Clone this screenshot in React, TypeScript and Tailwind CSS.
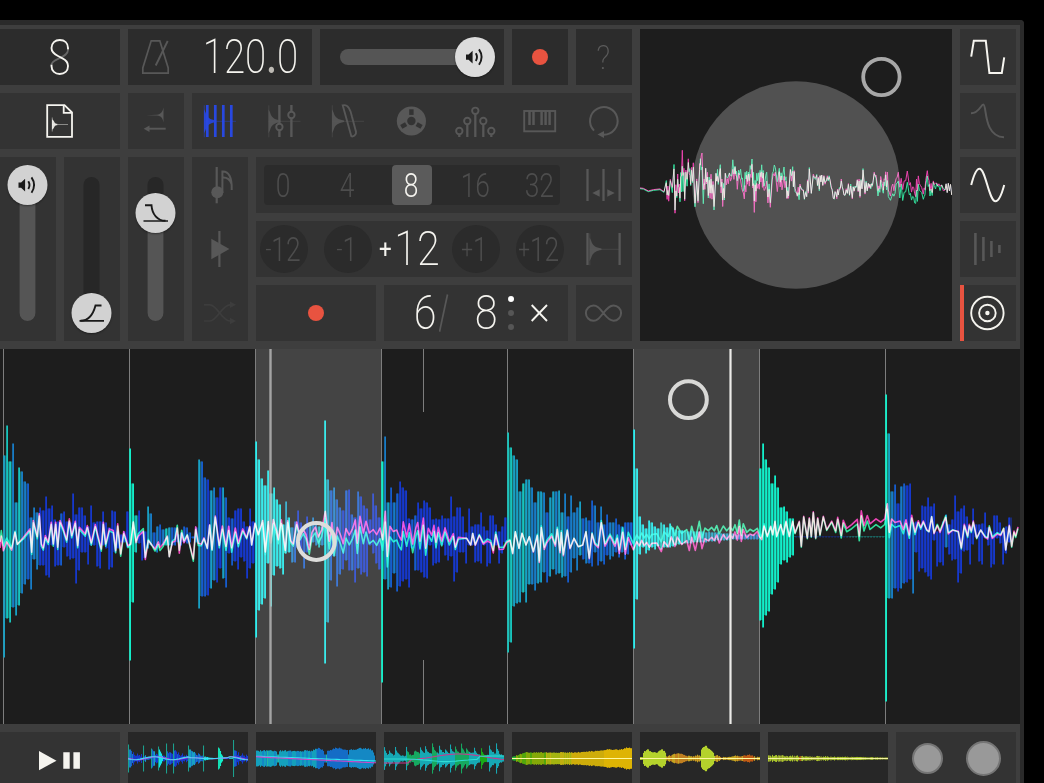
import React from "react";

const INK = "#f5f4ef";
const DIM = "#585858";

/* ---------- waveform data: one entry per beat, one bar every 3px ---------- */
type Beat = { up: number[]; down: number[]; tint: string };

const PALETTE: Record<string, string> = {
  a: "#12efca",
  b: "#17c4bc",
  c: "#18a0c4",
  d: "#187cc6",
  e: "#165cce",
  f: "#1638cc",
  g: "#10e6e8",
};

const BEATS: Beat[] = [
  {
    up: [81,111,75,93,34,69,65,55,53,19,29,24,29,26,40,28,31,17,15,23,25,15,14,43,22,29,29,21,10,31,14,15,15,25,14,9,26,25,5,2,5,25],
    down: [120,81,85,70,78,68,56,47,42,52,22,32,28,28,38,40,8,29,28,28,10,19,22,21,46,33,15,15,27,8,8,29,31,8,11,32,30,15,11,5,5,10],
    tint: "cbbdcbddedddfffffffeffffffffffffffffffffff",
  },
  {
    up: [88,53,21,26,5,5,30,23,4,10,12,7,8,9,9,9,2,4,10,9,4,0,9,77,75,59,57,46,49,39,49,49,39,19,18,26,28,28,15,10,28,15],
    down: [123,65,15,6,23,21,11,8,11,15,8,8,8,8,8,8,5,8,5,6,5,1,5,71,59,59,58,51,43,45,31,41,50,16,28,24,32,20,24,41,31,26],
    tint: "aabfffcdededbceeeeeeeeeceefcdffcefefffffff",
  },
  {
    up: [95,77,58,51,66,43,49,37,32,12,35,19,9,15,26,14,9,20,12,19,12,10,12,116,57,46,49,37,29,26,46,47,22,19,45,40,31,28,17,43,31,19],
    down: [100,73,67,61,26,69,38,29,31,37,16,15,25,25,11,15,31,15,8,5,8,10,8,126,85,43,19,49,37,32,23,33,33,45,31,37,35,39,8,16,26,32],
    tint: "ggggggggggcgdeffefcddbdgcedeefefefefffffff",
  },
  {
    up: [75,100,34,49,34,43,55,49,46,18,17,21,34,28,36,34,29,17,18,17,21,18,18,40,20,29,29,20,4,28,10,12,12,24,10,6,21,21,12,5,10,19],
    down: [145,42,52,50,36,54,49,44,42,50,11,33,33,35,40,41,8,28,26,25,8,18,23,19,44,35,15,15,26,8,8,25,24,26,8,29,26,8,8,26,16,5],
    tint: "adcedeffffeeffffffffffffffffffffffffffffff",
  },
  {
    up: [104,89,81,77,45,53,57,57,49,34,45,45,44,24,39,45,45,46,24,43,20,41,24,29,35,18,19,16,36,31,14,30,12,22,14,14,18,12,10,14,14,14],
    down: [115,105,69,66,65,55,65,47,47,53,46,45,35,45,39,32,37,36,40,39,45,35,21,33,18,22,26,26,29,15,28,24,27,18,22,19,15,20,15,22,17,8],
    tint: "bbcccbccddccdeccdccdedddcedeededeeddeedeee",
  },
  {
    up: [107,68,20,12,8,16,14,10,8,14,12,9,13,9,7,6,6,6,5,6,5,5,5,5,4,5,4,4,4,3,3,3,3,3,2,2,2,2,2,2,2,2],
    down: [111,62,17,10,16,13,10,12,9,12,10,10,10,9,8,7,7,6,6,6,5,5,5,5,5,4,4,4,3,3,3,3,3,2,2,2,2,2,2,2,2,2],
    tint: "gggggggggbggggbggbccbbccccccccccccdddddddd",
  },
  {
    up: [68,93,77,69,53,61,49,29,30,25,18,18,0,0,0,0,0,0,0,0,0,0,0,0,0,0,0,0,0,0,0,0,0,0,0,0,0,0,0,0,0,0],
    down: [83,90,78,74,57,52,45,27,23,25,20,18,0,0,0,0,0,0,0,0,0,0,0,0,0,0,0,0,0,0,0,0,0,0,0,0,0,0,0,0,0,0],
    tint: "aaaaaaaaaaaafffffffdfffffffffdbbbbbbbbbbbb",
  },
  {
    up: [142,103,45,52,33,50,53,51,53,14,15,12,31,30,39,30,33,5,7,15,22,12,17,41,25,28,31,20,10,28,12,12,13,24,9,5,21,21,14,5,10,19],
    down: [164,61,61,51,54,51,46,45,42,56,15,34,31,35,39,42,3,29,25,28,10,17,23,22,45,36,14,13,27,7,0,24,27,1,8,30,27,1,6,27,16,5],
    tint: "acdefdeffdffffffffffdfffffffffffffffffffff",
  },
];

const BARS = BEATS.flatMap((b, n) =>
  b.up.map((u, i) => ({
    x: 3 + n * 126 + i * 3,
    up: u,
    down: b.down[i],
    color: PALETTE[b.tint[i]] ?? PALETTE.f,
  })),
);

/* deterministic pseudo-random value in 0..1 */
const noise = (n: number) => {
  const s = Math.sin(n * 127.1 + 11.7) * 43758.5453;
  return s - Math.floor(s);
};

/* ---------- input traces, stored as x,y pairs in third-pixel units ---------- */
type Trace = { ox: number; oy: number; pts: string };

const MAIN_TRACES: Trace[] = [
  {
    ox: 0,
    oy: 345,
    pts: "0,600 4,565 10,610 20,585 35,612 45,560 52,598 70,580 90,555 95,625 100,530 112,578 118,510 124,600 130,612 136,575 145,595 154,535 160,600 167,535 173,610 180,530 190,555 200,588 208,525 215,575 226,532 233,605 238,550 256,570 262,545 274,597 286,542 295,580 304,615 310,535 317,600 328,555 340,560 347,620 353,540 362,630 371,563 384,605 392,598 400,530 408,590 415,570 430,555 436,640 445,585 455,600 465,615 475,595 480,612 490,600 502,575 508,635 517,590 525,585 532,545 538,620 545,560 552,590 562,570 580,645 587,550 595,598 604,600 612,580 622,610 629,540 636,615 646,515 658,605 667,548 678,610 686,550 695,615 706,555 715,600 728,555 740,580 749,545 755,600",
  },
  {
    ox: 250,
    oy: 345,
    pts: "15,535 25,570 38,530 46,625 55,535 62,600 70,530 80,565 85,590 94,530 106,620 113,530 122,590 130,600 140,535 150,580 160,560 168,575 178,620 186,570 196,555 205,585 215,565 226,510 238,600 246,545 252,620 262,560 272,585 280,610 288,565 298,585 308,565 316,540 322,610 330,530 340,580 348,545 358,580 370,570 380,585 390,565 398,600 406,515 412,650 420,560 430,575 440,570 448,590 454,600 460,545 470,590 478,550 488,610 498,560 503,545 510,600 520,530 527,620 535,560 545,580 552,550 558,600 565,555 575,595 585,555 598,595 610,570 616,610 625,580 650,580 662,600 668,565 676,600 688,570 700,595 712,585 722,590 730,620 737,565 748,610",
  },
  {
    ox: 500,
    oy: 345,
    pts: "10,610 20,590 30,585 38,625 46,560 57,610 66,565 78,600 88,575 100,620 112,570 118,650 124,545 133,610 140,590 155,570 166,600 172,550 180,620 184,560 190,630 202,555 210,610 222,580 235,605 248,600 258,560 268,640 276,565 284,595 295,605 304,530 315,600 330,570 345,600 352,575 358,620 368,555 376,620 385,570 400,605 410,580 418,592 425,575 433,590 440,580 448,594 455,582 470,580 484,605 492,575 505,590 514,560 525,588 532,560 545,582 560,570 568,600 575,560 586,600 598,545 606,595 615,565 625,572 635,562 643,572 650,556 658,580 670,556 680,570 690,558 698,568 705,550 712,575 718,535 724,580 730,545 740,570 750,560 760,565 772,555",
  },
  {
    ox: 750,
    oy: 345,
    pts: "28,570 35,580 42,540 52,575 62,545 68,570 75,530 80,575 92,540 100,570 108,530 118,575 128,530 135,565 148,530 154,605 161,515 172,580 178,520 184,575 190,502 197,580 203,520 210,570 220,515 230,555 245,530 257,560 263,520 274,575 280,530 290,555 305,545 322,530 328,580 334,505 342,550 352,520 360,545 378,530 392,540 404,530 412,485 418,570 425,530 435,540 450,535 460,560 468,530 478,575 485,515 495,565 505,530 512,550 520,530 530,555 537,560 545,515 552,565 562,540 570,560 587,515 595,565 608,555 625,560 634,610 643,540 653,575 658,540 664,560 670,530 680,580 692,555 705,575 713,580 718,545 727,578 742,565 752,570 761,550 767,615 778,542 785,605 792,560 797,575 804,548",
  },
];

const SCOPE_TRACE: Trace = {
  ox: 640,
  oy: 130,
  pts: "0,175 10,176 25,184 40,180 60,178 72,186 79,155 86,205 91,150 97,180 102,110 105,245 113,140 120,210 127,85 134,210 145,92 152,165 160,105 165,225 170,150 174,215 179,110 186,90 190,200 197,115 205,200 213,140 222,235 228,130 235,160 241,110 248,220 256,130 265,150 275,140 285,110 292,165 296,125 305,160 313,190 320,130 328,160 336,95 343,230 350,145 358,170 365,115 372,175 380,140 391,225 397,140 406,120 412,170 418,120 426,165 432,125 441,205 448,165 458,117 465,180 472,198 480,165 490,180 500,200 508,115 514,190 520,135 530,135 538,180 545,135 555,160 562,140 570,150 580,205 588,190 595,195 604,150 612,195 622,190 632,165 637,205 645,170 652,150 660,200 669,118 675,190 685,160 692,175 700,150 708,140 714,190 722,145 730,185 737,130 745,190 755,185 765,175 775,140 788,195 802,140 808,180 818,185 827,210 835,150 845,180 850,200 857,160 862,130 870,190 880,155 890,160 900,175 915,180 925,160 935,195",
};

/* fills wide gaps in a trace with extra jittered samples */
function densify(t: Trace): Trace {
  const pts = t.pts.split(" ").map((p) => p.split(",").map(Number));
  const out: string[] = [];
  pts.forEach(([x, y], i) => {
    out.push(`${x},${y}`);
    const next = pts[i + 1];
    if (next && x > 75 && next[0] - x >= 7) {
      const lo = y + (next[1] - y) * 0.33;
      const hi = y + (next[1] - y) * 0.66;
      const gap = next[0] - x;
      out.push(`${x + gap * 0.33},${hi + (noise(x) - 0.5) * 34}`);
      out.push(`${x + gap * 0.66},${lo + (noise(x + 5) - 0.5) * 34}`);
    }
  });
  return { ...t, pts: out.join(" ") };
}

/* vertical separation of the two channels at a given x */
function mainSpread(x: number): number {
  if (x < 25) return -3 + x / 6;
  if (x < 125) return 1.1;
  if (x < 195) return 1.5 * Math.sin(x / 6);
  if (x < 290) return 1.2 + Math.sin(x / 7);
  if (x < 460) return 4.6 * Math.sin(((x - 290) / 170) * Math.PI) + 0.8;
  if (x < 610) return 0.6 * Math.sin(x / 9) - 0.6;
  if (x < 765) return -5 * Math.sin(((x - 605) / 165) * Math.PI) - 0.5;
  if (x < 830) return 0.4;
  if (x < 925) return 2.5 * Math.sin(((x - 830) / 95) * Math.PI) + 0.4;
  return 0.8 * Math.sin(x / 8);
}

function scopeSpread(x: number): number {
  const wobble = noise(Math.round(x * 3)) - 0.5;
  if (x < 665) return 0.4;
  if (x < 712) return x > 681 && x < 683.5 ? 8 : x > 701 && x < 703.5 ? 7 : wobble * 7;
  if (x < 800) return -4 * Math.sin(((x - 712) / 88) * Math.PI) + wobble * 6;
  if (x < 870) return wobble * 2;
  if (x < 945) return 4.4 * Math.sin(((x - 870) / 75) * Math.PI) + wobble * 3;
  return 0;
}

function toPoints(traces: Trace[], side: number, spread: (x: number) => number): string {
  return traces
    .flatMap((t) =>
      t.pts.split(" ").map((p) => {
        const [px, py] = p.split(",").map(Number);
        const x = t.ox + px / 3;
        const y = t.oy + py / 3 + side * spread(x);
        return `${x.toFixed(1)},${y.toFixed(1)}`;
      }),
    )
    .join(" ");
}

/* ---------- building blocks ---------- */
function Icon({ x, y, w = 56, h = 56, children }: { x: number; y: number; w?: number; h?: number; children: React.ReactNode }) {
  return (
    <svg className="block shrink-0" width={w} height={h} viewBox={`${x} ${y} ${w} ${h}`} fill="none">
      {children}
    </svg>
  );
}

function Decay({ x, y, color = DIM, len = 32, size = 16 }: { x: number; y: number; color?: string; len?: number; size?: number }) {
  const s = size / 16;
  return (
    <g fill={color}>
      <path
        opacity={0.9}
        d={`M${x} ${y - 12 * s} L${x + 1.5} ${y - 9 * s} C${x + 3} ${y - 3.5 * s} ${x + 6 * s} ${y - 1.8 * s} ${x + 12 * s} ${y - 0.7} L${x + 12 * s} ${y + 0.7} C${x + 6 * s} ${y + 1.8 * s} ${x + 3} ${y + 3.5 * s} ${x + 1.5} ${y + 9 * s} L${x} ${y + 12 * s}Z`}
      />
      <rect x={x - 0.3} y={y - 16 * s} width={1.2} height={32 * s} opacity={0.4} />
      <rect x={x} y={y - 0.5} width={len} height={1} opacity={0.45} />
    </g>
  );
}

function Speaker() {
  return (
    <svg width="40" height="40" viewBox="0 0 40 40" fill="none" className="block">
      <path d="M11 17.5h2.600l4-3.700v12.600l-4-3.700H11z" fill="#1a1a1a" />
      <path d="M20.800 16.300q2.400 3.800 0 7.600" stroke="#1a1a1a" strokeWidth="1.900" />
      <path d="M24 12.400q5.200 7.600 0 15.400" stroke="#1a1a1a" strokeWidth="1.900" />
    </svg>
  );
}

function Fader({ knobTop, fill, children }: { knobTop: string; fill: string; children: React.ReactNode }) {
  return (
    <div className="flex h-[184px] w-14 justify-center bg-[#333333] pt-5">
      <div className="relative h-36 w-4 -translate-x-[0.5px] rounded-full bg-[#272727]">
        <div className={`absolute bottom-0 left-0 w-4 rounded-b-full bg-[#555555] ${fill}`} />
        <div className={`absolute -left-3 size-10 rounded-full bg-[#d2d2d2] shadow-[0_1px_2px_rgba(0,0,0,0.4)] ${knobTop}`}>{children}</div>
      </div>
    </div>
  );
}

/* ---------- main waveform ---------- */
const RULES = [3, 129, 255, 381, 507, 633, 759, 885];

function Waveform() {
  return (
    <svg className="block isolate" width="1020" height="375" viewBox="0 349 1020 375">
      <rect x="0" y="349" width="1020" height="375" fill="#1d1d1d" />
      {RULES.map((x) => (
        <rect key={x} x={x} y={349} width={1} height={375} fill="#7d7d7d" />
      ))}
      <rect x={423} y={349} width={1} height={63} fill="#7d7d7d" />
      <rect x={423} y={660} width={1} height={64} fill="#7d7d7d" />
      {BARS.map((b, i) => {
        const next = BARS[i + 1] ?? b;
        const u = Math.min(b.up, next.up);
        const d = Math.min(b.down, next.down);
        return (
          <g key={i} fill={b.color}>
            <rect x={b.x + 1} y={536.5 - u} width={3} height={u + d + 0.5} opacity={0.5} />
            <rect x={b.x + 0.2} y={536.5 - b.up} width={1.8} height={b.up + b.down + 1} opacity={b.up + b.down ? 1 : 0.5} />
          </g>
        );
      })}
      <rect x={256} y={349} width={125} height={375} fill="#ffffff" opacity={0.178} />
      <rect x={634} y={349} width={125} height={375} fill="#ffffff" opacity={0.17} />
      <g fill="none" strokeWidth={1.6} strokeLinejoin="round">
        <polyline points={toPoints(MAIN_TRACES, -1, mainSpread)} stroke="#e82cac" className="mix-blend-screen" />
        <polyline points={toPoints(MAIN_TRACES, 1, mainSpread)} stroke="#16dc90" className="mix-blend-screen" />
      </g>
      <rect x={269.3} y={349} width={2.4} height={375} fill="#b5b5b5" opacity={0.85} />
      <rect x={729.4} y={349} width={2.2} height={375} fill="#ecebe8" />
      <circle cx={316.3} cy={541.5} r={18.4} fill="none" stroke="#dddddb" strokeWidth={4} />
      <circle cx={688.4} cy={399.7} r={18.4} fill="none" stroke="#d9d9d7" strokeWidth={4} />
    </svg>
  );
}

function Scope() {
  const trace = [densify(SCOPE_TRACE)];
  return (
    <svg className="block isolate" width="312" height="312" viewBox="640 29 312 312">
      <rect x="640" y="29" width="312" height="312" fill="#1d1d1d" />
      <circle cx={796} cy={185} r={103.7} fill="#515151" />
      <g fill="none" strokeWidth={1} strokeLinejoin="round">
        <polyline points={toPoints(trace, -1, scopeSpread)} stroke="#e82ca4" className="mix-blend-screen" />
        <polyline points={toPoints(trace, 1, scopeSpread)} stroke="#18dc90" className="mix-blend-screen" />
      </g>
      <circle cx={881.4} cy={77} r={18.2} fill="none" stroke="#a8a8a8" strokeWidth={3.8} />
    </svg>
  );
}

/* ---------- clip thumbnails ---------- */
type Clip = { amp: (x: number) => number; color: (x: number) => string; lines: string[] };

const bump = (x: number, c: number, w: number, h: number) => h * Math.exp(-(((x - c) / w) ** 2));
const HITS = [0, 5, 11, 22, 30, 36, 41, 48, 55, 61, 66, 71, 77, 82, 90, 97, 105, 112];
const SPIKES: Record<number, number> = { 0: 14, 15: 13, 23: 10, 30: 12, 38: 15, 45: 15, 60: 13, 75: 13, 90: 11, 91: 10, 105: 18.5 };

const CLIPS: Clip[] = [
  {
    amp: (x) => {
      const b = BARS[Math.min(BARS.length - 1, Math.round(x * 2.8))];
      return SPIKES[x] ?? Math.min(9, Math.max(0.5, (b.up + b.down) * 0.08));
    },
    color: (x) => (x in SPIKES ? (x > 85 && x < 95 ? "#14e0b4" : "#1ba08e") : BARS[Math.min(335, Math.round(x * 2.8))].color),
    lines: ["#c43ae0", "#45d8f4"],
  },
  {
    amp: (x) => ([21, 22, 68, 69, 70, 92].includes(x) ? 4 : x > 116 ? 9 - (x - 116) * 3 : 6.8 + bump(x, 62, 4, 3) + bump(x, 81, 6, 3) + bump(x, 106, 11, 2.5) + noise(x) * 1.6),
    color: (x) => (x === 11 || x === 22 || x === 70 ? "#25b89c" : noise(Math.floor(x / 2)) > 0.45 && x < 60 ? "#14a0bc" : x > 60 && x < 92 ? "#146cc6" : "#1488c4"),
    lines: ["#30e8f4", "#d048c8"],
  },
  {
    amp: (x) => {
      const hit = HITS.filter((h) => h <= x).pop() ?? 0;
      const body = x > 30 && x < 90 ? 4.5 : x > 104 ? 6 * (1 - (x - 104) / 20) : 2;
      return body + (4 + noise(hit) * 6) * Math.exp(-(x - hit) / 1.800) + noise(x) * 1.6;
    },
    color: (x) => ((x > 22 && x < 36) || (x > 47 && x < 53) || (x > 70 && x < 85) ? "#16a860" : x > 95 && x < 103 ? "#18aa18" : "#16a8b4"),
    lines: ["#c83a90", "#30dcd4"],
  },
  {
    amp: (x) => 1 + Math.min(4.5, x / 3) + (x > 60 ? (x - 60) / 16 : 0) + noise(x) + bump(x, 97, 3, 1) + bump(x, 115, 3, 1.5),
    color: (x) => (x < 4 ? "#20b030" : x < 34 ? (noise(Math.floor(x / 2)) > 0.5 ? "#84a808" : "#52a60c") : x < 60 ? (noise(x) > 0.5 ? "#c0b010" : "#a4b410") : x < 92 ? "#ceac0a" : "#deb404"),
    lines: ["#fff9a0"],
  },
  {
    amp: (x) => {
      if (x > 60 && x < 74) return 12.5 - Math.abs(x - 65) * 0.9 + noise(x) * 1.5;
      if (x > 2 && x < 26) return 5 + bump(x, 7, 3, 3) + bump(x, 21, 3, 3.5) + noise(x) * 1.4;
      return 0.6 + bump(x, 38, 9, 4) + bump(x, 57, 4, 2) + bump(x, 76, 3, 2) + bump(x, 97, 5, 1.5) + bump(x, 108, 5, 2.5) + noise(x) * 1.2;
    },
    color: (x) => (x < 26 || (x > 59 && x < 75) ? "#b4d22c" : x > 102 && x < 114 ? "#c05a14" : noise(x) > 0.5 ? "#c4a420" : "#c07f20"),
    lines: ["#fff8a0"],
  },
  {
    amp: (x) => 0.6 + (1 - x / 140) * (1.2 + noise(x) * 1.9),
    color: (x) => (x === 31 || x === 32 ? "#b86018" : noise(x * 3) > 0.4 ? "#a8c42a" : "#96a030"),
    lines: ["#f4f4a0"],
  },
];

function ClipCell({ clip, index }: { clip: Clip; index: number }) {
  const wave = (k: number) =>
    Array.from({ length: 41 }, (_, i) => {
      const x = i * 3;
      let y = 26.5;
      if (index === 0) y = 26.2 + Math.sin(x / 6 + k * 0.5) * (x > 60 && x < 100 ? 0.4 : 1.5);
      if (index === 1) y = k ? 24.8 + x * 0.05 : 24.2 + x * 0.04;
      if (index === 2) y = k ? 27 + bump(x, 62, 22, 2.6) - (x > 95 ? 3 : 0) : x < 25 ? 31 : 29 - bump(x, 75, 36, 7);
      return `${x},${y.toFixed(1)}`;
    }).join(" ");
  return (
    <div className="h-[51px] w-[120px] overflow-hidden bg-[#272727]">
      <svg className="block" width="120" height="51" viewBox="0 0 120 51">
        {Array.from({ length: 120 }, (_, x) => {
          const a = clip.amp(x);
          return <rect key={x} x={x} y={26.5 - a} width={1.05} height={a * 2} fill={clip.color(x)} />;
        })}
        {clip.lines.map((c, k) => (
          <polyline key={c} points={wave(k)} fill="none" stroke={c} strokeWidth={1.1} />
        ))}
      </svg>
    </div>
  );
}

/* ---------- panels ---------- */
function TopRow() {
  return (
    <div className="flex gap-2">
      <div className="h-14 w-[120px] bg-[#2c2c2c]">
        <Icon x={0} y={29} w={120}>
          <path d="M68 50C68 54 64 56 60 58C56 60 51.5 61 51.5 65" stroke="#666" strokeWidth="1.8" />
          <path d="M68 49.5V48C68 43 64.5 40 59.8 40S51.5 43 51.5 48C51.5 52 54 54 58 56L62.5 58.3C66 60 68 62 68 66C68 71 64.5 74 59.8 74S51.5 71 51.5 66V64.8" stroke={INK} strokeWidth="1.9" />
        </Icon>
      </div>
      <div className="flex h-14 w-[184px] bg-[#2c2c2c]">
        <Icon x={128} y={29}>
          <path d="M151.2 40.8H159.8L168.2 68V73.2H142.8V68Z" stroke={DIM} strokeWidth="1.7" />
          <path d="M167.7 41L155.7 65.5" stroke={DIM} strokeWidth="1.9" />
        </Icon>
        <div className="flex h-14 w-32 items-center justify-end pr-[14px]">
          <span className="origin-right scale-x-[0.8] text-[48px] leading-none font-extralight whitespace-nowrap text-[#f5f4ef]">
            120<span className="font-medium text-[#bdbab4]">.</span>0
          </span>
        </div>
      </div>
      <div className="flex h-14 w-[184px] items-center bg-[#2c2c2c] pl-5">
        <div className="relative h-4 w-[135px] rounded-full bg-[#555555]">
          <div className="absolute -top-3 -right-5 size-10 rounded-full bg-[#dcdcdc] shadow-[0_1px_2px_rgba(0,0,0,0.4)]">
            <Speaker />
          </div>
        </div>
      </div>
      <div className="flex size-14 items-center justify-center bg-[#2c2c2c]">
        <div className="size-4 rounded-full bg-[#e85340]" />
      </div>
      <div className="flex size-14 items-center justify-center bg-[#2c2c2c] pr-0.5">
        <span className="scale-x-95 text-[33px] leading-none font-extralight text-[#5c5c5c]">?</span>
      </div>
    </div>
  );
}

function ModeRow() {
  return (
    <div className="flex gap-2">
      <div className="h-14 w-[120px] bg-[#333333]">
        <Icon x={0} y={93} w={120}>
          <path d="M47.2 105.2H64.5L72 112.5V136.8H47.2Z" stroke={INK} strokeWidth="1.8" />
          <path d="M63.7 105V112.8H72" stroke={INK} strokeWidth="1.8" />
          <Decay x={52} y={124.5} color={INK} len={16} size={7} />
        </Icon>
      </div>
      <div className="h-14 w-14 bg-[#333333]">
        <Icon x={128} y={93}>
          <path d="M163.5 107.5V122.5C162.5 118 161.5 116.2 157 115.6L146 115.3L157 114.8C161 114 162.5 112 163.5 107.5Z" fill={DIM} />
          <path d="M147 128.7H165.7" stroke={DIM} strokeWidth="1.9" />
          <path d="M143.7 128.7L149.5 125.5V132Z" fill={DIM} />
        </Icon>
      </div>
      <div className="flex h-14 w-[440px] gap-2 bg-[#333333]">
        <Icon x={192} y={93}>
          <Decay x={204} y={121.3} color="#2848e0" />
          {[207.3, 215.3, 223.3, 231.3].map((x) => (
            <path key={x} d={`M${x} 105V137`} stroke="#2848e0" strokeWidth="2.7" />
          ))}
        </Icon>
        <Icon x={256} y={93}>
          <Decay x={268.5} y={121.3} />
          <path d="M279.4 105V123.5M279.4 130.5V137M291.4 105V111.5M291.4 118.5V137" stroke={DIM} strokeWidth="2.4" />
          <circle cx="279.4" cy="127" r="3.2" stroke={DIM} strokeWidth="1.9" />
          <circle cx="291.4" cy="115" r="3.2" stroke={DIM} strokeWidth="1.9" />
        </Icon>
        <Icon x={320} y={93}>
          <Decay x={332} y={121.3} />
          <path d="M342.7 105.3C348 104 350.7 110 352 116.700L356 131.7C356.7 135 353 137 351.3 136.2Z" stroke={DIM} strokeWidth="1.9" />
        </Icon>
        <Icon x={384} y={93}>
          <circle cx="411.4" cy="121" r="14.6" fill={DIM} />
          <circle cx="411.4" cy="121" r="4.2" fill="#333" />
          {[0, 120, 240].map((r) => (
            <rect key={r} x="409.2" y="109.3" width="4.4" height="5.6" fill="#333" transform={`rotate(${r} 411.4 121)`} />
          ))}
        </Icon>
        <Icon x={448} y={93}>
          {[[459.3, 131], [467.3, 121], [475.3, 110.8], [483.3, 121], [491.3, 131]].map(([x, y]) => (
            <g key={x} stroke={DIM}>
              <circle cx={x} cy={y} r="3.2" strokeWidth="1.9" />
              <path d={`M${x} ${y + 3.5}V137`} strokeWidth="2.3" />
            </g>
          ))}
        </Icon>
        <Icon x={512} y={93}>
          <rect x="524.2" y="111" width="31" height="20.3" stroke={DIM} strokeWidth="1.9" />
          <path d="M529.5 111V125M533.5 111V125M541.6 111V125M545.6 111V125M549.6 111V125" stroke={DIM} strokeWidth="2.5" />
        </Icon>
        <Icon x={576} y={93}>
          <path d="M594 130.6A13.8 13.8 0 1 1 603.3 134.7" stroke={DIM} strokeWidth="2" />
          <path d="M597.5 134.5L604 131V138Z" fill={DIM} />
        </Icon>
      </div>
    </div>
  );
}

const GLYPH = "relative right-px scale-x-[0.8] text-[33px] leading-none font-light whitespace-nowrap";

function StepButton({ label }: { label: string }) {
  return (
    <div className="flex size-12 items-center justify-center rounded-full bg-[#2b2b2b]">
      <span className="relative right-px flex shrink-0 scale-x-[0.8] items-center text-[33px] leading-none font-light whitespace-nowrap">
        <span className="text-[26px]">{label[0]}</span>
        {label.slice(1)}
      </span>
    </div>
  );
}

function Controls() {
  return (
    <div className="flex gap-2">
      <Fader knobTop="top-[-12px]" fill="h-[136px]">
        <Speaker />
      </Fader>
      <Fader knobTop="top-[116px]" fill="h-0">
        <svg width="40" height="40" viewBox="0 0 40 40" fill="none" className="block">
          <path d="M9 27.8C18 27.8 22 20 24 12.5H30" stroke="#1a1a1a" strokeWidth="1.9" />
          <path d="M8 27.8H32.5" stroke="#1a1a1a" strokeWidth="1.7" />
        </svg>
      </Fader>
      <Fader knobTop="top-4" fill="h-[108px]">
        <svg width="40" height="40" viewBox="0 0 40 40" fill="none" className="block">
          <path d="M9.5 12.2H16C16.5 21 22 27.8 30 27.8" stroke="#1a1a1a" strokeWidth="1.9" />
          <path d="M8 28H32.5" stroke="#1a1a1a" strokeWidth="1.7" />
        </svg>
      </Fader>
      <div className="flex h-[184px] w-14 flex-col gap-2 bg-[#333333]">
        <Icon x={192} y={157}>
          <path d="M216.7 167V203.3" stroke={DIM} strokeWidth="2.2" />
          <circle cx="217.3" cy="192.3" r="6" fill={DIM} />
          <path d="M222.4 193V171.5C228.5 171 232.2 177 231.7 190M222.4 177.5C226.5 177 230.5 179.5 231.5 184" stroke={DIM} strokeWidth="2" />
        </Icon>
        <Icon x={192} y={221}>
          <path d="M219.4 231V267" stroke={DIM} strokeWidth="2.2" />
          <path d="M211.3 238.7L229.4 249L211.3 259.3Z" fill={DIM} />
        </Icon>
        <Icon x={192} y={285}>
          <path d="M204 304.8H210C217 304.8 222 321 230 321H232M204 321H210C217 321 222 304.8 230 304.8H232" stroke="#3d3d3d" strokeWidth="1.7" />
          <path d="M230 301.5L236 304.8L230 308ZM230 317.8L236 321L230 324.3Z" fill="#3d3d3d" />
        </Icon>
      </div>
      <div className="flex w-[376px] flex-col gap-2">
        <div className="flex h-14 items-center bg-[#333333] pl-2">
          <div className="mr-4 flex h-10 w-[296px] gap-6 rounded bg-[#2b2b2b] text-[#4d4d4d]">
            {["0", "4", "8", "16", "32"].map((n) => (
              <div key={n} className={`flex size-10 items-center justify-center rounded ${n === "8" ? "bg-[#5b5b5b] text-[#f5f4ef]" : ""}`}>
                <span className={GLYPH}>{n}</span>
              </div>
            ))}
          </div>
          <Icon x={576} y={157}>
            <path d="M587.5 169V201M603.5 169V201M619.6 169V201" stroke={DIM} strokeWidth="2.3" />
            <path d="M592.3 193L599.7 189.3V196.7ZM614.7 193L607.3 189.3V196.7Z" fill={DIM} />
          </Icon>
        </div>
        <div className="flex h-14 items-center bg-[#333333] pl-1">
          <div className="mr-3 flex w-[304px] gap-4 text-[#4d4d4d]">
            <StepButton label="-12" />
            <StepButton label="-1" />
            <div className="flex size-12 items-center justify-center text-[#f5f4ef]">
              <span className="relative right-[3px] flex shrink-0 scale-x-[0.86] items-center gap-[3px] leading-none whitespace-nowrap">
                <span className="text-[26px] font-normal">+</span>
                <span className="text-[48px] font-extralight">12</span>
              </span>
            </div>
            <StepButton label="+1" />
            <StepButton label="+12" />
          </div>
          <Icon x={576} y={221}>
            <path d="M587.5 233V265M619.6 233V265" stroke={DIM} strokeWidth="2.3" />
            <Decay x={589.5} y={249.3} len={30} />
          </Icon>
        </div>
        <div className="flex gap-2">
          <div className="flex h-14 w-[120px] items-center justify-center bg-[#333333]">
            <div className="size-4 rounded-full bg-[#e85340]" />
          </div>
          <div className="flex h-14 w-[184px] items-center bg-[#333333] text-[48px] leading-none font-extralight text-[#f5f4ef]">
            <div className="ml-[27px] flex w-7 justify-center">
              <span className="scale-x-[0.86]">6</span>
            </div>
            <div className="w-3">
              <svg className="block" width="12" height="56" viewBox="0 0 12 56">
                <path d="M.5 46.7L8.5 9.5" stroke={DIM} strokeWidth="1.7" />
              </svg>
            </div>
            <div className="ml-[21px] flex w-7 justify-center">
              <span className="scale-x-[0.86]">8</span>
            </div>
            <div className="ml-2 flex w-1.5 flex-col gap-2">
              <div className="size-1.5 rounded-full bg-white" />
              <div className="size-1.5 rounded-full bg-[#565656]" />
              <div className="size-1.5 rounded-full bg-[#565656]" />
            </div>
            <svg className="ml-[17px] block" width="17" height="18" viewBox="0 0 17 18">
              <path d="M.7 1L16 17M16 1L.7 17" stroke={INK} strokeWidth="1.9" />
            </svg>
          </div>
          <div className="size-14 bg-[#333333]">
            <Icon x={576} y={285}>
              <path
                d="M603.4 313C599 307.5 597 305.5 593.5 305.5A7.6 7.6 0 0 0 593.5 320.7C597 320.7 599 318.5 603.4 313S610 305.5 613.5 305.5A7.6 7.6 0 0 1 613.5 320.7C610 320.7 607.5 318.5 603.4 313Z"
                stroke={DIM}
                strokeWidth="2"
              />
            </Icon>
          </div>
        </div>
      </div>
    </div>
  );
}

function EffectColumn() {
  return (
    <div className="flex w-14 flex-col gap-2">
      <div className="bg-[#333333]">
        <Icon x={960} y={29}>
          <path d="M971.2 56.7L973.8 40.8H985.8L989.4 73H1001.8L1004.2 57.3" stroke={INK} strokeWidth="2" />
        </Icon>
      </div>
      <div className="bg-[#333333]">
        <Icon x={960} y={93}>
          <path d="M971 113.3C979 113.3 981 104.5 983.3 104.5C987 104.5 983 136.5 1004 137.3" stroke={DIM} strokeWidth="2" />
        </Icon>
      </div>
      <div className="bg-[#333333]">
        <Icon x={960} y={157}>
          <path d="M971.2 185C974 174 976.5 168.7 979.5 168.7C985.5 168.7 989 201.3 995.5 201.3C999 201.3 1001.5 195 1004.2 185" stroke={INK} strokeWidth="2" />
        </Icon>
      </div>
      <div className="bg-[#333333]">
        <Icon x={960} y={221}>
          <path d="M975.4 233V265M983.4 237V261M991.4 241V257M999.4 245V253" stroke={DIM} strokeWidth="2.6" />
        </Icon>
      </div>
      <div className="relative bg-[#333333]">
        <div className="absolute inset-y-0 left-0 w-1 bg-[#e85340]" />
        <Icon x={960} y={285}>
          <circle cx="987.4" cy="313" r="16.2" stroke={INK} strokeWidth="1.9" />
          <circle cx="987.4" cy="313" r="8.3" stroke={INK} strokeWidth="1.9" />
          <circle cx="987.4" cy="313" r="2.2" fill={INK} />
        </Icon>
      </div>
    </div>
  );
}

function BottomBar() {
  return (
    <div className="flex gap-2">
      <div className="h-[51px] w-[120px] bg-[#333333]">
        <Icon x={0} y={732} w={120} h={51}>
          <path d="M39 751L56.5 760.7L39 770.3Z" fill={INK} />
          <path d="M63.3 752.3H69.7V768.8H63.3ZM73.4 752.3H79.9V768.8H73.4Z" fill={INK} />
        </Icon>
      </div>
      {CLIPS.map((c, i) => (
        <ClipCell key={i} clip={c} index={i} />
      ))}
      <div className="flex h-[51px] w-[120px] items-center bg-[#333333] pt-px pl-4">
        <div className="size-[31px] rounded-full border-2 border-[#757575] bg-[#999999]" />
        <div className="ml-[23px] size-[35px] rounded-full border-2 border-[#757575] bg-[#999999]" />
      </div>
    </div>
  );
}

export default function App() {
  return (
    <div className="h-[783px] w-[1044px] overflow-hidden bg-black pt-5 font-['Roboto',sans-serif]">
      <div className="flex h-[763px] w-[1024px] flex-col overflow-hidden rounded-tr border-t-[5px] border-r-4 border-[#2a2a2a] bg-[#3e3e3e] pt-1">
        <div className="flex gap-2">
          <div className="flex w-[632px] flex-col gap-2">
            <TopRow />
            <ModeRow />
            <Controls />
          </div>
          <Scope />
          <EffectColumn />
        </div>
        <div className="my-2 h-[375px] w-[1020px]">
          <Waveform />
        </div>
        <BottomBar />
      </div>
    </div>
  );
}
